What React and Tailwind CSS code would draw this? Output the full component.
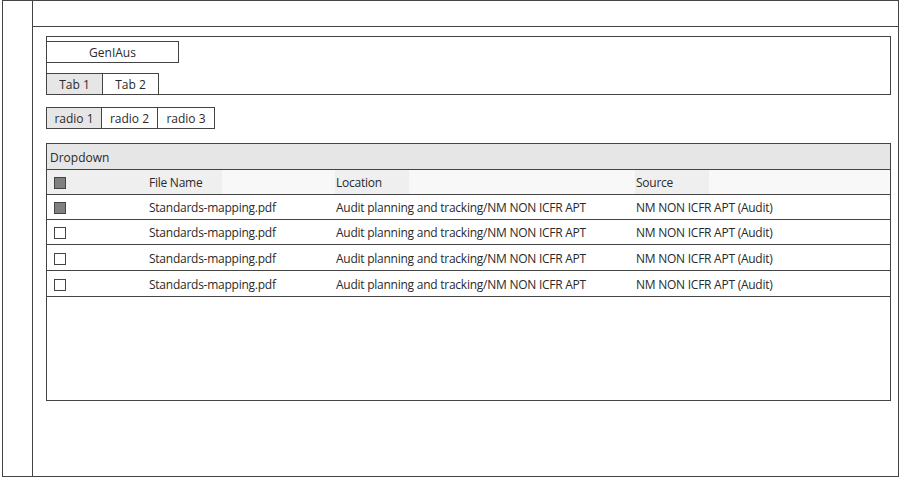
import React from 'react';

const rows = [
  { checked: true, h: 'h-[25px]' },
  { checked: false, h: 'h-[25px]' },
  { checked: false, h: 'h-[26px]' },
  { checked: false, h: 'h-[26px]' },
];

const Checkbox = ({ checked }) => (
  <span
    className={`mt-[2px] block h-[12px] w-[12px] border border-[#444] ${checked ? 'bg-[#808080]' : 'bg-white'}`}
  />
);

const HeaderCell = ({ children }) => (
  <div className="flex h-full items-center">
    <span className="flex h-full w-[74px] items-center bg-[#efefef] pl-px pt-[2px]">{children}</span>
  </div>
);

export default function App() {
  return (
    <div
      className="h-[479px] w-[900px] overflow-hidden bg-white text-[12px] text-[#2a2a2a]"
      style={{ fontFamily: '"Open Sans", "Liberation Sans", sans-serif' }}
    >
      <div className="ml-[2px] flex h-[477px] w-[897px] border border-[#444]">
        {/* sidebar */}
        <div className="w-[30px] shrink-0 border-r border-[#444]" />

        <div className="flex min-w-0 flex-1 flex-col">
          {/* top bar */}
          <div className="h-[26px] shrink-0 border-b border-[#444]" />

          <div className="pl-[13px] pr-[7px] pt-[9px]">
            {/* app panel with tabs */}
            <div className="border border-[#444]">
              <div className="-ml-px mt-[4px] flex h-[22px] w-[133px] items-center justify-center border border-[#444] pt-px">
                GenIAus
              </div>
              <div className="-mb-px -ml-px mt-[10px] flex">
                <div className="flex h-[22px] w-[57px] items-center justify-center border border-[#444] bg-[#e6e6e6] pt-px">
                  Tab 1
                </div>
                <div className="-ml-px flex h-[22px] w-[57px] items-center justify-center border border-[#444] pt-px">
                  Tab 2
                </div>
              </div>
            </div>

            {/* radio group */}
            <div className="mt-[12px] flex">
              <div className="flex h-[22px] w-[56px] items-center justify-center border border-[#444] bg-[#e6e6e6] pt-px">
                radio 1
              </div>
              <div className="-ml-px flex h-[22px] w-[57px] items-center justify-center border border-[#444] pt-px">
                radio 2
              </div>
              <div className="-ml-px flex h-[22px] w-[58px] items-center justify-center border border-[#444] pt-px">
                radio 3
              </div>
            </div>

            {/* table */}
            <div className="mt-[14px] h-[258px] border border-[#444] tracking-[-0.25px]">
              <div className="flex h-[26px] items-center border-b border-[#444] bg-[#e6e6e6] pl-[3px] pt-[2px] tracking-normal">
                Dropdown
              </div>
              <div className="grid h-[25px] grid-cols-[101px_187px_300px_1fr] border-b border-[#444] bg-[#f8f8f8]">
                <div className="flex items-center bg-[#efefef] pl-[7px]">
                  <Checkbox checked />
                </div>
                <HeaderCell>File Name</HeaderCell>
                <HeaderCell>Location</HeaderCell>
                <HeaderCell>Source</HeaderCell>
              </div>
              {rows.map((row, i) => (
                <div
                  key={i}
                  className={`grid ${row.h} grid-cols-[101px_187px_300px_1fr] items-center border-b border-[#444]`}
                >
                  <div className="pl-[7px]">
                    <Checkbox checked={row.checked} />
                  </div>
                  <div className="pl-px pt-[2px]">Standards-mapping.pdf</div>
                  <div className="pl-px pt-[2px]">Audit planning and tracking/NM NON ICFR APT</div>
                  <div className="pl-px pt-[2px]">NM NON ICFR APT (Audit)</div>
                </div>
              ))}
            </div>
          </div>
        </div>
      </div>
    </div>
  );
}
